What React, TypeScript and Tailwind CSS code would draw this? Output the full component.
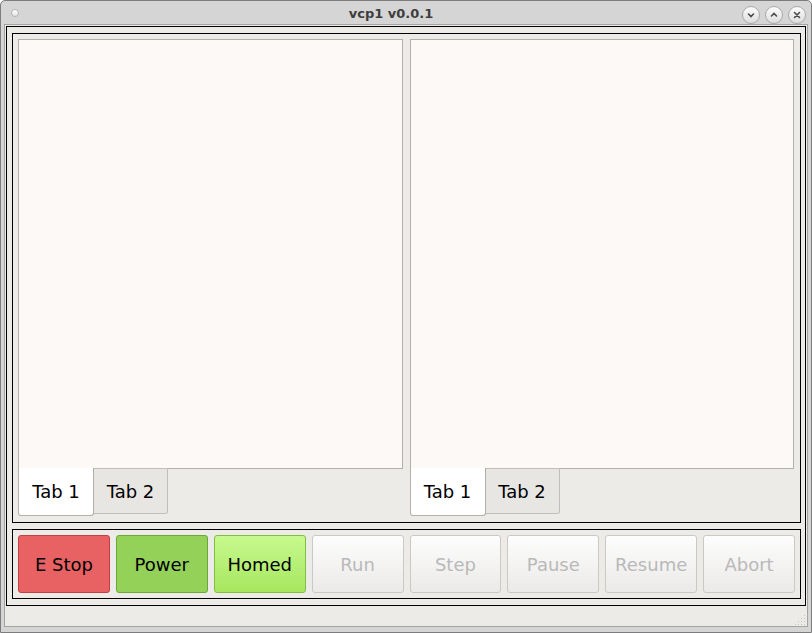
import React from 'react';

const font = { fontFamily: '"DejaVu Sans", "Liberation Sans", sans-serif' };

function TitleButton({ kind }: { kind: 'min' | 'max' | 'close' }) {
  return (
    <div className="w-[18px] h-[18px] rounded-full border border-[#a9a9a9] bg-gradient-to-b from-[#fbfbfb] to-[#dedede] flex items-center justify-center">
      <svg width="10" height="10" viewBox="0 0 10 10" fill="none" stroke="#4a4a4a" strokeWidth="1.6" strokeLinecap="round">
        {kind === 'min' && <path d="M2.5 4 L5 6.5 L7.5 4" />}
        {kind === 'max' && <path d="M2.5 6 L5 3.5 L7.5 6" />}
        {kind === 'close' && <path d="M2.5 2.5 L7.5 7.5 M7.5 2.5 L2.5 7.5" />}
      </svg>
    </div>
  );
}

function TabPane() {
  return (
    <div className="flex-1 flex flex-col">
      <div className="h-[430px] border border-[#b3b0ab] bg-[#fcf9f6]" />
      <div className="flex -mt-px">
        <div className="w-[76px] h-[48px] border border-t-0 border-[#b3b0ab] bg-white rounded-b-[3px] flex items-center justify-center text-[18px] text-black">
          Tab 1
        </div>
        <div className="w-[74px] h-[46px] border border-l-0 border-[#c2bfba] bg-[#e8e6e3] rounded-br-[3px] flex items-center justify-center text-[18px] text-black">
          Tab 2
        </div>
      </div>
    </div>
  );
}

const buttons = [
  { label: 'E Stop', cls: 'bg-[#e86163] border-[#c33f42] text-black' },
  { label: 'Power', cls: 'bg-[#93d158] border-[#6aa83a] text-black' },
  { label: 'Homed', cls: 'bg-gradient-to-b from-[#c6fa8e] to-[#a7e65e] border-[#7fbf45] text-black' },
  { label: 'Run', cls: 'bg-gradient-to-b from-[#fdfdfd] to-[#ebeae8] border-[#ccc9c5] text-[#b9b9b9]' },
  { label: 'Step', cls: 'bg-gradient-to-b from-[#fdfdfd] to-[#ebeae8] border-[#ccc9c5] text-[#b9b9b9]' },
  { label: 'Pause', cls: 'bg-gradient-to-b from-[#fdfdfd] to-[#ebeae8] border-[#ccc9c5] text-[#b9b9b9]' },
  { label: 'Resume', cls: 'bg-gradient-to-b from-[#fdfdfd] to-[#ebeae8] border-[#ccc9c5] text-[#b9b9b9]' },
  { label: 'Abort', cls: 'bg-gradient-to-b from-[#fdfdfd] to-[#ebeae8] border-[#ccc9c5] text-[#b9b9b9]' },
];

export default function App() {
  return (
    <div style={font} className="w-[812px] h-[633px] bg-[#d5d5d5] border border-[#7c7c7c] rounded-t-[5px] flex flex-col overflow-hidden">
      {/* title bar */}
      <div className="h-[23px] flex items-center shrink-0">
        <div className="w-[44px] pl-[10px] flex items-center">
          <div className="w-[8px] h-[8px] rounded-full border border-[#b5b5b5] bg-gradient-to-b from-white to-[#e4e4e4]" />
        </div>
        <div className="flex-1 text-center text-[13px] font-bold text-[#3d3d3d] pt-[3px]">vcp1 v0.0.1</div>
        <div className="w-[74px] flex items-center justify-end gap-[5px] pr-[5px] pt-[5px]">
          <TitleButton kind="min" />
          <TitleButton kind="max" />
          <TitleButton kind="close" />
        </div>
      </div>

      {/* client area */}
      <div className="mx-[3px] h-[603px] border border-[#a3a3a3] bg-[#edebe7] flex flex-col">
        <div className="ml-px mt-px w-[800px] h-[580px] border border-black pt-[6px] pl-[5px] flex flex-col gap-[6px]">
          {/* top group */}
          <div className="w-[789px] h-[490px] border border-black pt-[5px] pl-[5px] pr-[6px] flex gap-[7px]">
            <TabPane />
            <TabPane />
          </div>
          {/* bottom group */}
          <div className="w-[789px] h-[70px] border border-black px-[5px] py-[5px] flex gap-[6px]">
            {buttons.map((b) => (
              <div
                key={b.label}
                className={`flex-1 border rounded-[3px] flex items-center justify-center text-[18px] ${b.cls}`}
              >
                {b.label}
              </div>
            ))}
          </div>
        </div>
        {/* status bar */}
        <div className="flex-1 flex items-end justify-end pr-[1px] pb-[1px]">
          <svg width="11" height="11" viewBox="0 0 11 11" fill="#c4c1bc">
            <rect x="9" y="1" width="1" height="1" />
            <rect x="6" y="4" width="1" height="1" />
            <rect x="9" y="4" width="1" height="1" />
            <rect x="3" y="7" width="1" height="1" />
            <rect x="6" y="7" width="1" height="1" />
            <rect x="9" y="7" width="1" height="1" />
            <rect x="0" y="10" width="1" height="1" />
            <rect x="3" y="10" width="1" height="1" />
            <rect x="6" y="10" width="1" height="1" />
            <rect x="9" y="10" width="1" height="1" />
          </svg>
        </div>
      </div>
    </div>
  );
}
